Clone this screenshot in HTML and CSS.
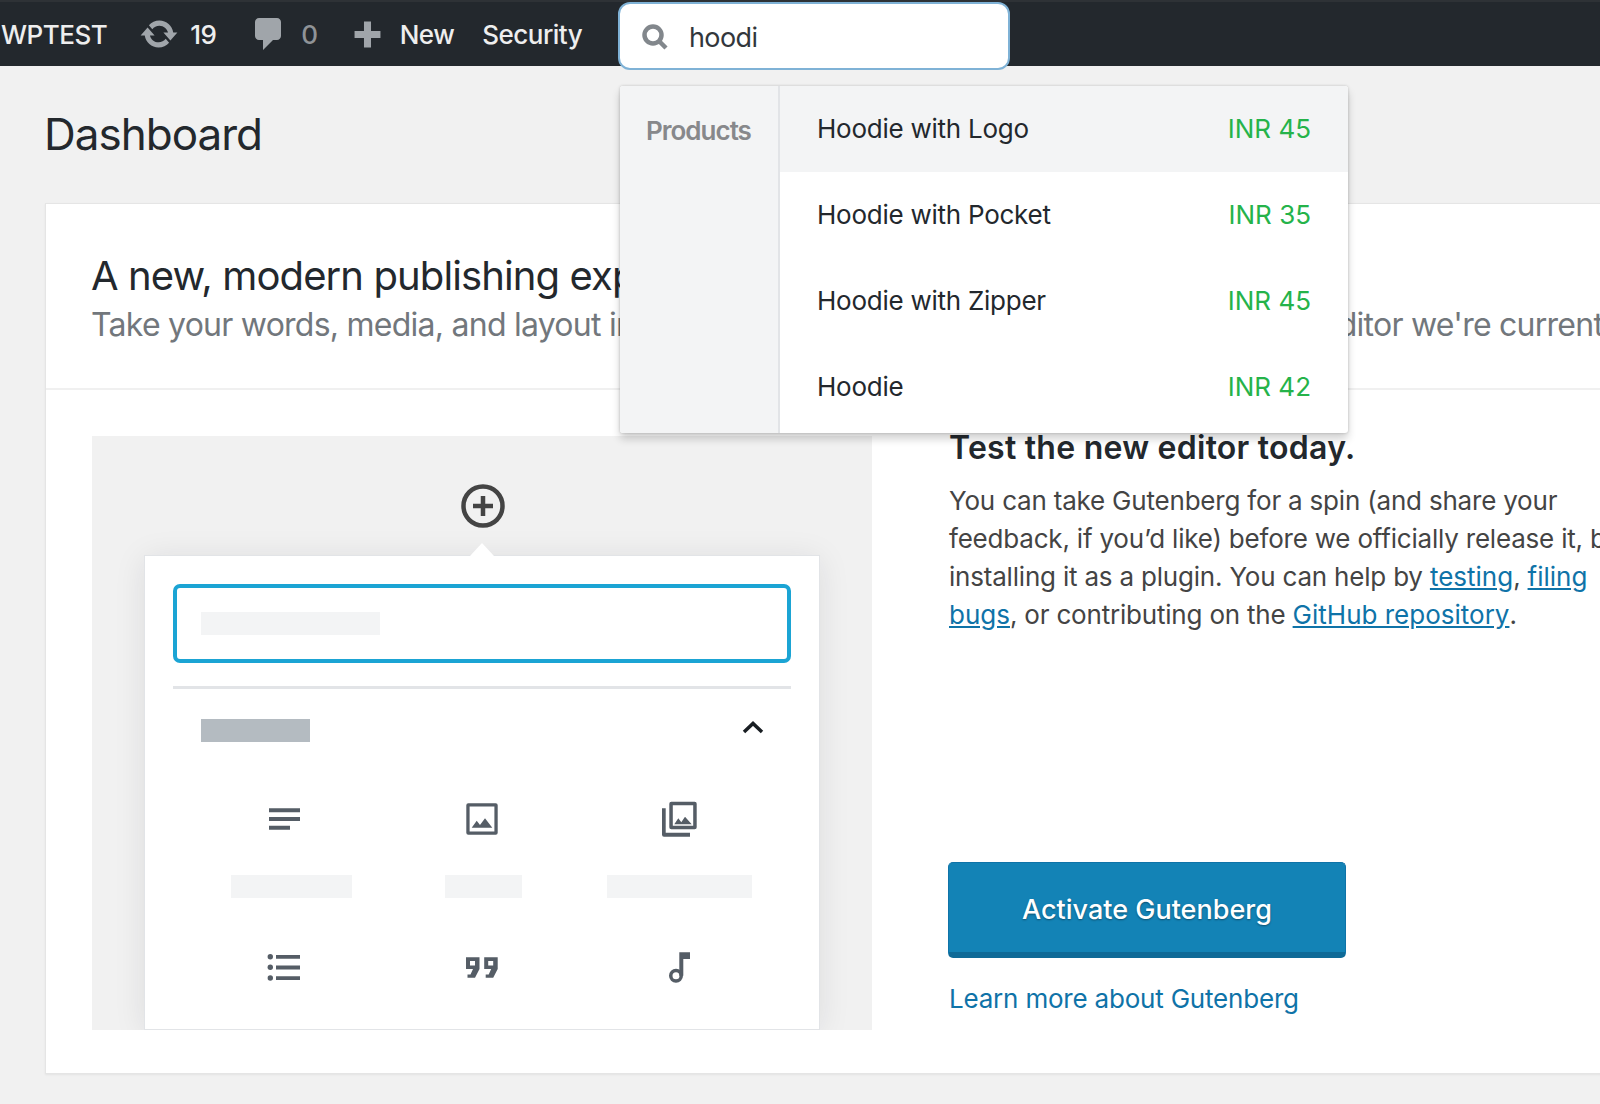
FILE: index.html
```html
<!DOCTYPE html>
<html lang="en">
<head>
<meta charset="UTF-8">
<title>Dashboard</title>
<link rel="stylesheet" href="styles.css">
</head>
<body>
    <!-- admin bar -->
    <div class="adminbar">
        <span class="bar-item site-name">WPTEST</span>
        <span class="bar-item updates">
            <svg class="bar-icon" viewBox="0 0 20 20"><path d="M10.2 3.28c3.53 0 6.43 2.61 6.92 6h2.08l-3.5 4-3.5-4h2.32c-.45-1.97-2.21-3.45-4.32-3.45-1.45 0-2.73.71-3.54 1.78L4.95 5.66C6.23 4.2 8.11 3.28 10.2 3.28zm-.4 13.44c-3.52 0-6.43-2.61-6.92-6H.8l3.5-4c1.17 1.33 2.33 2.67 3.5 4H5.48c.45 1.97 2.21 3.45 4.32 3.45 1.45 0 2.73-.71 3.54-1.78l1.71 1.95c-1.28 1.46-3.15 2.38-5.25 2.38z"/></svg>
            19
        </span>
        <span class="bar-item comments">
            <svg class="bar-icon" viewBox="0 0 20 20"><path d="M5 2h9c1.1 0 2 .9 2 2v7c0 1.1-.9 2-2 2h-2l-5 5v-5H5c-1.1 0-2-.9-2-2V4c0-1.100.9-2 2-2z"/></svg>
            <span class="zero">0</span>
        </span>
        <span class="bar-item new">
            <svg class="bar-icon" viewBox="0 0 20 20"><path d="M17 8.100v3.800h-5.100V17H8.100v-5.100H3V8.100h5.100V3h3.800v5.100z"/></svg>
            New
        </span>
        <span class="bar-item security">Security</span>

        <div class="search-box">
            <svg class="search-icon" viewBox="0 0 26 26"><circle cx="11" cy="11" r="8.500"/><path d="M17 17l7 7"/></svg>
            <span>hoodi</span>
        </div>
    </div>

    <!-- search results -->
    <div class="results">
        <div class="results-side">Products</div>
        <div class="results-list">
            <div class="result active"><span class="result-name">Hoodie with Logo</span><span class="price">INR 45</span></div>
            <div class="result"><span class="result-name">Hoodie with Pocket</span><span class="price">INR 35</span></div>
            <div class="result"><span class="result-name">Hoodie with Zipper</span><span class="price">INR 45</span></div>
            <div class="result"><span class="result-name">Hoodie</span><span class="price">INR 42</span></div>
        </div>
    </div>

    <div class="wrap">
        <h1>Dashboard</h1>

        <div class="card">
            <div class="card-head">
                <h2>A new, modern publishing experience is coming soon.</h2>
                <p>Take your words, media, and layout in new directions with Gutenberg, the WordPress editor we're currently building.</p>
            </div>
            <div class="card-body">
                <div class="preview">
                    <svg class="add-icon" viewBox="0 0 44 44"><circle cx="22" cy="22" r="19.500"/><path d="M22 12v20M12 22h20"/></svg>
                    <div class="inserter">
                        <div class="fake-input"><div class="ph ph-search"></div></div>
                        <div class="inserter-rule"></div>
                        <div class="inserter-title">
                            <div class="ph-title"></div>
                            <svg class="chevron" viewBox="0 0 22 13"><path d="M2 11l9-8.500 9 8.500"/></svg>
                        </div>
                        <div class="blocks">
                            <div class="block">
                                <svg class="block-icon" viewBox="0 0 36 36"><path d="M3 7.300h31v4H3zM3 16h31v4H3zM3 24.700h21v4H3z"/></svg>
                                <div class="ph ph-label1"></div>
                            </div>
                            <div class="block">
                                <svg class="block-icon" viewBox="0 0 36 36"><path fill-rule="evenodd" d="M4.300 2.300h27.400a2 2 0 0 1 2 2v27.400a2 2 0 0 1-2 2H4.300a2 2 0 0 1-2-2V4.300a2 2 0 0 1 2-2zM5.600 5.600v24.800h24.800V5.600zM7.700 26.700l5-7 3.300 4.300 5-6.700 7.300 9.400z"/></svg>
                                <div class="ph ph-label2"></div>
                            </div>
                            <div class="block">
                                <svg class="block-icon" viewBox="0 0 36 36"><path fill-rule="evenodd" d="M9.300.700h23.400a2 2 0 0 1 2 2v23.600a2 2 0 0 1-2 2H9.300a2 2 0 0 1-2-2V2.700a2 2 0 0 1 2-2zM10.800 4.200v20.600h20.400V4.200zM12.300 23.300l4-6 3 4 3.700-5.600 6.700 7.600zM0 7.300h3.700v24.400H28v4H2a2 2 0 0 1-2-2z"/></svg>
                                <div class="ph ph-label3"></div>
                            </div>
                            <div class="block">
                                <svg class="block-icon" viewBox="0 0 36 36"><circle cx="4.300" cy="6.700" r="2.700"/><circle cx="4.300" cy="17.300" r="2.700"/><circle cx="4.300" cy="28" r="2.700"/><path d="M10 5h24v3.800H10zM10 15.600h24v3.800H10zM10 26.200h24V30H10z"/></svg>
                            </div>
                            <div class="block">
                                <svg class="block-icon" viewBox="0 0 36 36"><path fill-rule="evenodd" d="M2 7.300h13.500V19L11 27.700H3.500v-3.200h3L9 19H2zM6 11v4.500h5V11zM20.200 7.300h13.500V19l-4.500 8.700h-7.500v-3.200h3l2.500-5.500h-7zM24.200 11v4.500h5V11z"/></svg>
                            </div>
                            <div class="block">
                                <svg class="block-icon" viewBox="0 0 36 36"><path d="M17.300 2.300H28V9h-6.700v16.700h-4z"/><path fill-rule="evenodd" d="M14 18.700a7 7 0 1 0 0 14 7 7 0 1 0 0-14zm0 3.500a3.500 3.500 0 1 1 0 7 3.500 3.500 0 1 1 0-7z"/></svg>
                            </div>
                        </div>
                    </div>
                </div>

                <div class="info">
                    <h3>Test the new editor today.</h3>
                    <p>You can take Gutenberg for a spin (and share your<br>
                    feedback, if you’d like) before we officially release it, by<br>
                    installing it as a plugin. You can help by <a href="#">testing</a>, <a href="#">filing</a><br>
                    <a href="#">bugs</a>, or contributing on the <a href="#">GitHub repository</a>.</p>
                    <button class="activate">Activate Gutenberg</button>
                    <a class="learn" href="#">Learn more about Gutenberg</a>
                </div>
            </div>
        </div>
    </div>
</body>
</html>
```

FILE: styles.css
```css
html, body{
    margin:0;
    height:1104px;
    overflow:hidden;
}
body{
    position:relative;
    background:#f1f1f1;
    font-family:"Inter","Noto Sans",sans-serif;
    color:#23282d;
}

/* admin bar */
.adminbar{
    display:flex;
    align-items:center;
    height:64px;
    border-top:2px solid #2e3236;
    background:#23282d;
    color:#eee;
    font-size:26px;
    font-weight:500;
    letter-spacing:-.5px;
    padding-left:1px;
}
.bar-item{
    display:flex;
    align-items:center;
}
.bar-icon{
    fill:#a0a5aa;
}
.updates{
    margin-left:32px;
}
.updates .bar-icon{
    width:40px;
    height:40px;
    margin-right:11px;
}
.comments{
    margin-left:33px;
}
.comments .bar-icon{
    width:40px;
    height:40px;
    margin-right:12px;
}
.zero{
    color:#8f9397;
}
.new{
    margin-left:31px;
}
.new .bar-icon{
    width:37px;
    height:37px;
    margin-right:14px;
}
.security{
    margin-left:28px;
}
.search-box{
    position:absolute;
    left:618px;
    top:2px;
    box-sizing:border-box;
    width:392px;
    height:68px;
    display:flex;
    align-items:center;
    padding:2px 0 0 22px;
    background:#fff;
    border:2px solid #7fb2d6;
    border-radius:12px;
    color:#32373c;
    font-size:27px;
    font-weight:400;
    letter-spacing:-.6px;
}
.search-icon{
    width:26px;
    height:26px;
    margin-right:21px;
    fill:none;
    stroke:#82878c;
    stroke-width:4.500;
}

/* search results */
.results{
    position:absolute;
    left:620px;
    top:86px;
    z-index:5;
    display:flex;
    width:728px;
    height:347px;
    background:#fff;
    border-radius:3px;
    overflow:hidden;
    box-shadow:0 0 3px rgba(0,0,0,.2), 0 6px 8px rgba(0,0,0,.18);
}
.results-side{
    box-sizing:border-box;
    width:160px;
    padding:29px 0 0 26px;
    background:#f3f4f5;
    border-right:2px solid #e2e4e7;
    color:#87888b;
    font-size:26px;
    font-weight:600;
    letter-spacing:-1px;
}
.results-list{
    flex:1;
}
.result{
    box-sizing:border-box;
    display:flex;
    justify-content:space-between;
    align-items:center;
    height:86px;
    padding:0 37px 2px;
    font-size:26px;
    color:#23282d;
}
.result.active{
    background:#f3f4f5;
}
.result-name{
    letter-spacing:-.25px;
}
.price{
    color:#25b34a;
}

/* page */
.wrap{
    padding-left:45px;
}
h1{
    margin:0 0 0 -1px;
    padding-top:40px;
    height:97px;
    font-size:44px;
    font-weight:400;
    letter-spacing:-1px;
    line-height:56px;
}
.card{
    box-sizing:border-box;
    width:1700px;
    height:871px;
    background:#fff;
    border:1px solid #e5e5e5;
    box-shadow:0 1px 2px rgba(0,0,0,.06);
}
.card-head{
    box-sizing:border-box;
    height:186px;
    padding:46px 46px 0 45px;
    border-bottom:2px solid #f0f0f0;
    white-space:nowrap;
}
.card-head h2{
    margin:0;
    font-size:40px;
    font-weight:400;
    letter-spacing:-.9px;
    line-height:52px;
}
.card-head p{
    margin:0;
    color:#72777c;
    font-size:32px;
    letter-spacing:-.75px;
    line-height:46px;
}
.card-body{
    display:flex;
    padding:46px 0 0 46px;
}

/* left preview */
.preview{
    box-sizing:border-box;
    width:780px;
    height:594px;
    padding-top:48px;
    background:#f1f1f1;
    overflow:hidden;
}
.add-icon{
    display:block;
    width:44px;
    height:44px;
    margin:0 auto;
    fill:none;
    stroke:#444;
    stroke-width:4.500;
    transform:translateX(1px);
}
.inserter{
    position:relative;
    box-sizing:border-box;
    width:674px;
    height:473px;
    margin:28px 0 0 53px;
    padding:28px 28px 0;
    background:#fff;
    box-shadow:0 0 0 1px #e2e4e7, 0 3px 30px rgba(25,30,35,.1);
}
.inserter::before{
    content:"";
    position:absolute;
    left:325px;
    top:-13px;
    border-left:12px solid transparent;
    border-right:12px solid transparent;
    border-bottom:13px solid #fff;
}
.fake-input{
    box-sizing:border-box;
    height:79px;
    padding:24px 24px 0;
    border:4px solid #1ba4d4;
    border-radius:7px;
}
.ph{
    height:23px;
    background:#f3f4f5;
}
.ph-search{
    width:179px;
}
.inserter-rule{
    height:3px;
    margin-top:23px;
    background:#e2e4e7;
}
.inserter-title{
    display:flex;
    justify-content:space-between;
    align-items:center;
    height:23px;
    margin-top:30px;
    padding:0 27px 0 28px;
}
.ph-title{
    width:109px;
    height:23px;
    background:#b4bbc1;
}
.chevron{
    width:22px;
    height:13px;
    margin-bottom:6px;
    fill:none;
    stroke:#191e23;
    stroke-width:3.500;
}
.blocks{
    display:grid;
    grid-template-columns:repeat(3, 198px);
    grid-auto-rows:149px;
    margin:59px 0 0 12px;
}
.block{
    display:flex;
    flex-direction:column;
    align-items:center;
}
.block-icon{
    display:block;
    flex:none;
    width:36px;
    height:36px;
    fill:#555d66;
}
.block .ph{
    flex:none;
    margin-top:38px;
}
.block .ph-label1{
    width:121px;
    margin-left:15px;
}
.block .ph-label2{
    width:77px;
    margin-left:3px;
}
.block .ph-label3{
    width:145px;
    margin-right:1px;
}

/* right side */
.info{
    padding-left:77px;
    white-space:nowrap;
}
.info h3{
    margin:-8px 0 0;
    font-size:32px;
    font-weight:600;
    letter-spacing:.25px;
    line-height:40px;
}
.info p{
    margin:14px 0 0;
    color:#444;
    font-size:26px;
    letter-spacing:-.2px;
    line-height:38px;
}
.info a{
    color:#0f73a8;
}
.info p a{
    letter-spacing:0;
}
.activate{
    display:block;
    box-sizing:border-box;
    width:398px;
    height:96px;
    margin:228px 0 0 -1px;
    padding-top:4px;
    background:#1383b6;
    border:1px solid #0f73a8;
    border-bottom:6px solid #0f6a97;
    border-radius:5px;
    color:#fff;
    font-family:inherit;
    font-size:27px;
    font-weight:500;
    text-shadow:0 1px 2px rgba(0,0,0,.4);
}
.info .learn{
    display:block;
    margin-top:25px;
    font-size:26px;
    letter-spacing:-.2px;
    text-decoration:none;
}
```
